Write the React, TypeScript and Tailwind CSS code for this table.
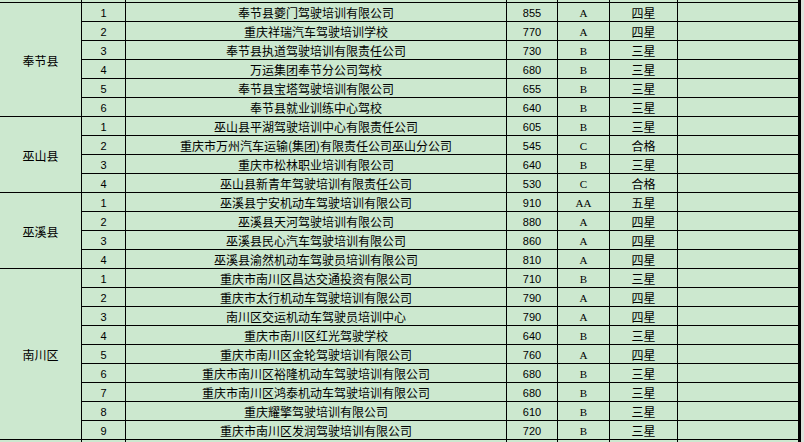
type Row = [string, string, string, string, string];

const groups: { county: string; rows: Row[] }[] = [
  {
    county: '奉节县',
    rows: [
      ['1', '奉节县夔门驾驶培训有限公司', '855', 'A', '四星'],
      ['2', '重庆祥瑞汽车驾驶培训学校', '770', 'A', '四星'],
      ['3', '奉节县执道驾驶培训有限责任公司', '730', 'B', '三星'],
      ['4', '万运集团奉节分公司驾校', '680', 'B', '三星'],
      ['5', '奉节县宝塔驾驶培训有限公司', '655', 'B', '三星'],
      ['6', '奉节县就业训练中心驾校', '640', 'B', '三星'],
    ],
  },
  {
    county: '巫山县',
    rows: [
      ['1', '巫山县平湖驾驶培训中心有限责任公司', '605', 'B', '三星'],
      ['2', '重庆市万州汽车运输(集团)有限责任公司巫山分公司', '545', 'C', '合格'],
      ['3', '重庆市松林职业培训有限公司', '640', 'B', '三星'],
      ['4', '巫山县新青年驾驶培训有限责任公司', '530', 'C', '合格'],
    ],
  },
  {
    county: '巫溪县',
    rows: [
      ['1', '巫溪县宁安机动车驾驶培训有限公司', '910', 'AA', '五星'],
      ['2', '巫溪县天河驾驶培训有限公司', '880', 'A', '四星'],
      ['3', '巫溪县民心汽车驾驶培训有限公司', '860', 'A', '四星'],
      ['4', '巫溪县渝然机动车驾驶员培训有限公司', '810', 'A', '四星'],
    ],
  },
  {
    county: '南川区',
    rows: [
      ['1', '重庆市南川区昌达交通投资有限公司', '710', 'B', '三星'],
      ['2', '重庆市太行机动车驾驶培训有限公司', '790', 'A', '四星'],
      ['3', '南川区交运机动车驾驶员培训中心', '790', 'A', '四星'],
      ['4', '重庆市南川区红光驾驶学校', '640', 'B', '三星'],
      ['5', '重庆市南川区金轮驾驶培训有限公司', '760', 'A', '四星'],
      ['6', '重庆市南川区裕隆机动车驾驶培训有限公司', '680', 'B', '三星'],
      ['7', '重庆市南川区鸿泰机动车驾驶培训有限公司', '680', 'B', '三星'],
      ['8', '重庆耀擎驾驶培训有限公司', '610', 'B', '三星'],
      ['9', '重庆市南川区发润驾驶培训有限公司', '720', 'B', '三星'],
    ],
  },
];

const cell = 'h-full flex items-center justify-center border-r border-black pt-[2px]';
const cjk = "font-['Noto_Sans_CJK_SC',sans-serif] text-[12px]";
const num = "font-['Liberation_Sans',sans-serif] text-[11px]";
const serif = "font-['Liberation_Serif',serif] text-[11px]";

function Cells({ row }: { row?: Row }) {
  return (
    <>
      <div className={`w-[44px] ${cell} ${num}`}>{row?.[0]}</div>
      <div className={`w-[381px] ${cell} ${cjk}`}>{row?.[1]}</div>
      <div className={`w-[51px] ${cell} ${num}`}>{row?.[2]}</div>
      <div className={`w-[52px] ${cell} ${serif}`}>{row?.[3]}</div>
      <div className={`w-[68px] ${cell} ${cjk}`}>{row?.[4]}</div>
      <div className="w-[123px] h-full border-r-[3px] border-black" />
    </>
  );
}

function Strip({ className }: { className: string }) {
  return (
    <div className={`flex shrink-0 ${className}`}>
      <div className="w-[82px] h-full border-r border-black" />
      <Cells />
    </div>
  );
}

export default function App() {
  return (
    <div className="flex w-[804px] h-[442px] overflow-hidden bg-[#cce8cf] text-black leading-none">
      <div className="flex flex-col w-[801px]">
        <Strip className="h-[2px]" />
        {groups.map((g) => (
          <div key={g.county} className="flex shrink-0 border-t border-black">
            <div className={`w-[82px] border-r border-black flex items-center justify-center pt-[2px] ${cjk}`}>
              {g.county}
            </div>
            <div className="flex flex-col">
              {g.rows.map((r, i) => (
                <div
                  key={r[0]}
                  className={`flex ${i < g.rows.length - 1 ? 'h-[19px] border-b border-black' : 'h-[18px]'}`}
                >
                  <Cells row={r} />
                </div>
              ))}
            </div>
          </div>
        ))}
        <Strip className="h-[20px] border-t border-black" />
      </div>
      <div className="w-[3px] h-full bg-[#dde5dd]" />
    </div>
  );
}
